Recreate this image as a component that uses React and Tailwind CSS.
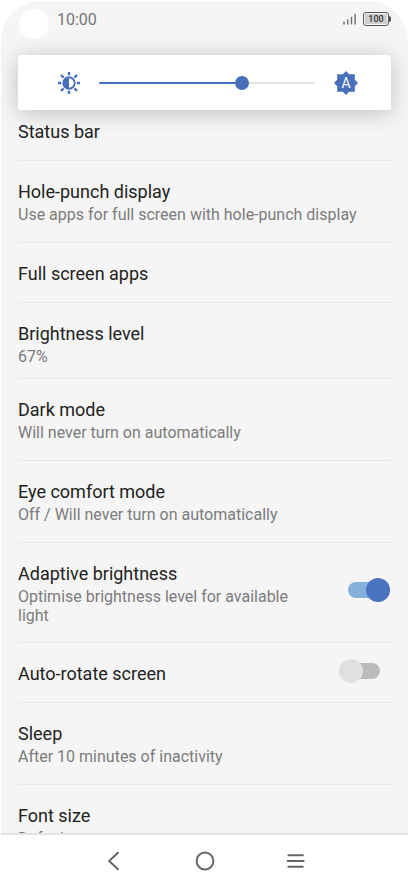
import { useState } from "react";
import clsx from "clsx";

const settings = [
  { id: "status-bar", title: "Status bar", first: true },
  {
    id: "hole-punch",
    title: "Hole-punch display",
    summary: "Use apps for full screen with hole-punch display",
  },
  { id: "full-screen", title: "Full screen apps" },
  { id: "brightness", title: "Brightness level", summary: "67%", tight: true },
  { id: "dark-mode", title: "Dark mode", summary: "Will never turn on automatically" },
  { id: "eye-comfort", title: "Eye comfort mode", summary: "Off / Will never turn on automatically" },
  {
    id: "adaptive",
    title: "Adaptive brightness",
    summary: "Optimise brightness level for available light",
    toggle: true,
  },
  { id: "auto-rotate", title: "Auto-rotate screen", toggle: true },
  { id: "sleep", title: "Sleep", summary: "After 10 minutes of inactivity" },
  { id: "font-size", title: "Font size", summary: "Default" },
];

function SignalIcon() {
  return (
    <svg className="w-[14px] h-3" viewBox="0 0 14 12" fill="#6b6b6b" aria-hidden="true">
      <rect x="0.3" y="8.5" width="1.4" height="3" />
      <rect x="4" y="6.5" width="1.4" height="5" />
      <rect x="7.8" y="3.8" width="1.4" height="7.7" />
      <rect x="11.4" y="0.8" width="1.4" height="10.7" />
    </svg>
  );
}

function Battery() {
  return (
    <div className="flex items-center">
      <div className="w-[26px] h-[14px] rounded-[3px] border border-[#555] p-px">
        <div className="h-full bg-[#cfcfcf] text-[9px] leading-[10px] font-medium text-center text-[#333]">100</div>
      </div>
      <div className="w-[2px] h-[6px] rounded-r-xs bg-[#555]" />
    </div>
  );
}

function SunIcon() {
  return (
    <svg className="w-6 h-6" viewBox="0 0 24 24" aria-hidden="true">
      <g stroke="#4a6fba" strokeWidth="2.4">
        <path d="M12 1v3.2M12 19.8V23M1 12h3.2M19.8 12H23M4 4l2.6 2.6M17.4 17.4L20 20M4 20l2.6-2.6M17.4 6.6L20 4" />
      </g>
      <circle cx="12" cy="12" r="5.7" fill="#fff" stroke="#4a6fba" strokeWidth="1.9" />
      <path d="M12 6a6 6 0 0 0 0 12z" fill="#4a6fba" />
    </svg>
  );
}

function AutoBrightnessIcon() {
  return (
    <span className="relative flex w-6 h-6 items-center justify-center">
      <svg className="absolute inset-0 w-6 h-6" viewBox="0 0 24 24" fill="#4a6fba" aria-hidden="true">
        <path d="M12 0l3.2 3.2H20.8V8.8L24 12l-3.2 3.2v5.6h-5.6L12 24l-3.2-3.2H3.2v-5.6L0 12l3.2-3.2V3.2h5.6z" />
      </svg>
      <span className="relative text-[14px] leading-6 text-white">A</span>
    </span>
  );
}

function BrightnessCard() {
  const max = 255;
  const [level, setLevel] = useState(172);
  const percent = (level / max) * 100;

  return (
    <div className="relative z-10 mx-[17px] h-[55px] flex items-center rounded-xs bg-white pl-[39px] pr-[33px] shadow-[0_3px_22px_rgba(0,0,0,0.22)]">
      <SunIcon />
      <input
        type="range"
        min="0"
        max={max}
        value={level}
        onChange={(e) => setLevel(Number(e.target.value))}
        aria-label="Brightness"
        className="ml-[18px] mr-[19px] h-[2px] min-w-0 flex-1 appearance-none rounded-full [&::-webkit-slider-thumb]:appearance-none [&::-webkit-slider-thumb]:size-[14px] [&::-webkit-slider-thumb]:rounded-full [&::-webkit-slider-thumb]:bg-[#4a6fba]"
        style={{ background: `linear-gradient(to right, #4a6fba ${percent}%, #e2e2e2 ${percent}%)` }}
      />
      <button type="button" aria-label="Automatic brightness">
        <AutoBrightnessIcon />
      </button>
    </div>
  );
}

function Toggle({ id, checked, onChange }) {
  return (
    <span className="mr-[11px] flex shrink-0 pb-[6px]">
      <input
        id={id}
        type="checkbox"
        role="switch"
        checked={checked}
        onChange={onChange}
        className={clsx(
          "relative appearance-none h-4 w-8 rounded-full",
          "before:absolute before:-top-[4px] before:size-6 before:rounded-full",
          checked
            ? "bg-[#85b1da] before:left-[18px] before:bg-[#4a73c0]"
            : "bg-[#bbb] before:-left-[9px] before:bg-[#e0e0e0]"
        )}
      />
    </span>
  );
}

function rowPadding(item) {
  if (!item.summary) return "pb-[15px]";
  if (item.tight) return "pb-[12px]";
  return item.toggle ? "pb-[17px]" : "pb-[18px]";
}

function SettingRow({ item, checked, onToggle }) {
  const Text = item.toggle ? "label" : "button";
  const textProps = item.toggle ? { htmlFor: item.id } : { type: "button" };

  return (
    <li
      className={clsx(
        "flex items-center border-b border-[#e8e8e8]",
        item.first ? "pt-[9px]" : "pt-[18px]",
        rowPadding(item)
      )}
    >
      <Text {...textProps} className="min-w-0 flex-1 text-left">
        <span className="block text-[18px] leading-[26px] text-[#222]">{item.title}</span>
        {item.summary && (
          <span className={clsx("block text-[16px] leading-[19px] text-[#7c7c7c]", item.toggle && "pr-10")}>
            {item.summary}
          </span>
        )}
      </Text>
      {item.toggle && <Toggle id={item.id} checked={checked} onChange={onToggle} />}
    </li>
  );
}

export default function App() {
  const [enabled, setEnabled] = useState({ adaptive: true, "auto-rotate": false });

  const toggle = (id) => setEnabled((prev) => ({ ...prev, [id]: !prev[id] }));

  return (
    <div className="h-screen flex flex-col bg-white p-px pb-0 font-['Roboto',sans-serif]">
      <main className="flex min-h-0 flex-1 flex-col overflow-hidden rounded-t-[40px] border-b-2 border-[#e2e2e2] bg-[#f5f5f5]">
        <header className="flex h-[54px] shrink-0 items-start justify-between pl-[18px] pr-[17px] pt-2">
          <div className="flex items-start gap-2">
            <span className="size-[30px] rounded-full bg-white" />
            <time className="text-[16px] leading-[22px] text-[#777]">10:00</time>
          </div>
          <div className="flex items-center gap-[6px] pt-[3px]">
            <SignalIcon />
            <Battery />
          </div>
        </header>

        <BrightnessCard />

        <ul className="min-h-0 flex-1 overflow-hidden px-[17px]">
          {settings.map((item) => (
            <SettingRow
              key={item.id}
              item={item}
              checked={Boolean(enabled[item.id])}
              onToggle={() => toggle(item.id)}
            />
          ))}
        </ul>
      </main>

      <nav className="flex h-[53px] shrink-0 justify-center pb-[2px]">
        <button type="button" aria-label="Back" className="flex w-[91px] items-center justify-center">
          <svg className="w-6 h-6" viewBox="0 0 24 24" fill="none" stroke="#666" strokeWidth="2" strokeLinecap="round" strokeLinejoin="round">
            <path d="M16 3.8L7.2 12l8.8 8.2" />
          </svg>
        </button>
        <button type="button" aria-label="Home" className="flex w-[91px] items-center justify-center">
          <svg className="w-6 h-6" viewBox="0 0 24 24" fill="none" stroke="#666" strokeWidth="2">
            <circle cx="12" cy="12" r="8.4" />
          </svg>
        </button>
        <button type="button" aria-label="Recent apps" className="flex w-[91px] items-center justify-center">
          <svg className="w-6 h-6" viewBox="0 0 24 24" fill="none" stroke="#666" strokeWidth="2" strokeLinecap="round">
            <path d="M4.4 6.2h14.4M3.6 12h16M4.4 17.8h14.4" />
          </svg>
        </button>
      </nav>
    </div>
  );
}
